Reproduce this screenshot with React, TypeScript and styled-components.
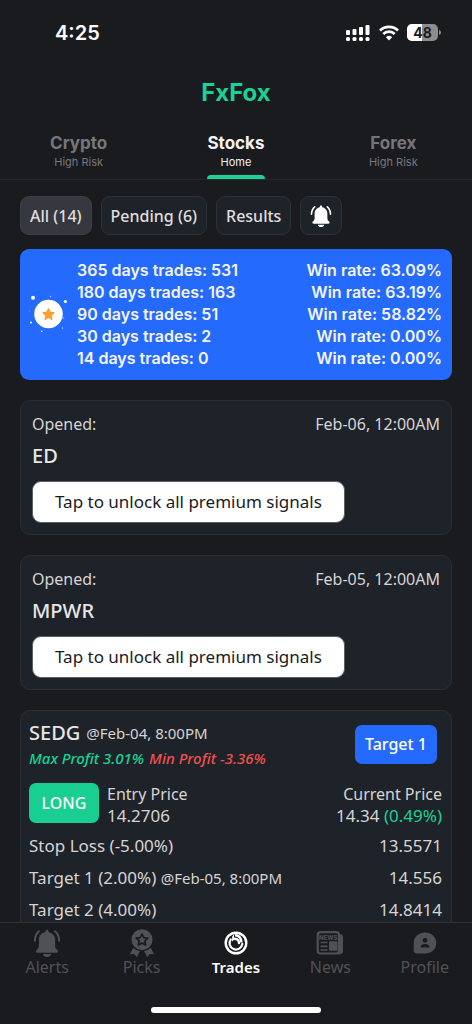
import React from "react";
import styled, { createGlobalStyle } from "styled-components";

const green = "#1bd196";
const blue = "#246bfd";
const panel = "#1e2329";
const display = `Inter, "Liberation Sans", sans-serif`;
const body = `"Noto Sans", "Open Sans", sans-serif`;

const Global = createGlobalStyle`
  * { box-sizing: border-box; }
  html, body, #root { height: 100%; }
  body { margin: 0; background: #1a1b1f; color: #d6d4d4; font: 16px/22px ${body}; }
  button { font: inherit; color: inherit; border: 0; padding: 0; background: none; cursor: pointer; }
  svg { display: block; flex: none; }
`;

const Screen = styled.div`
  height: 100vh;
  display: flex;
  flex-direction: column;
`;

const StatusBar = styled.div`
  display: flex;
  align-items: center;
  justify-content: space-between;
  padding: 20px 31px 0 55px;
  height: 46px;
  flex: none;
  color: #fff;
`;

const Clock = styled.time`
  font: 600 20px/24px ${display};
`;

const StatusIcons = styled.div`
  display: flex;
  align-items: center;
  gap: 8px;
`;

const Brand = styled.h1`
  margin: 31px 0 0;
  flex: none;
  text-align: center;
  color: ${green};
  font: 700 24px/32px ${display};
`;

const Tabs = styled.nav`
  display: grid;
  grid-template-columns: repeat(3, 1fr);
  justify-items: center;
  flex: none;
  margin-top: 23px;
  border-bottom: 1px solid #27282d;
`;

const Tab = styled.button<{ $active?: boolean }>`
  display: flex;
  flex-direction: column;
  align-items: center;
  height: 47px;
  color: ${(p) => (p.$active ? "#f4f2f2" : "#76777b")};
  font: 700 17px/22px ${display};

  small {
    font: 400 11px/16px ${display};
  }

  &::after {
    content: "";
    width: 100%;
    height: 4px;
    margin-top: auto;
    border-radius: 4px 4px 0 0;
    background: ${(p) => (p.$active ? green : "transparent")};
  }
`;

const Content = styled.main`
  flex: 1;
  min-height: 0;
  overflow: hidden;
  padding: 16px 20px 0;
  display: flex;
  flex-direction: column;
  gap: 20px;

  > * { flex: none; }
`;

const Filters = styled.div`
  display: flex;
  gap: 9px;
  margin-bottom: -6px;
`;

const Chip = styled.button<{ $active?: boolean }>`
  height: 39px;
  padding: 0 9px;
  border: 1px solid ${(p) => (p.$active ? "#3b3f46" : "#2b3238")};
  border-radius: 9px;
  background: ${(p) => (p.$active ? "#35383f" : panel)};
  color: #e0dede;
  font: 500 16px/22px ${body};

  svg { color: #fff; }
`;

const Stats = styled.section`
  display: flex;
  align-items: center;
  gap: 9px;
  padding: 10px 10px 11px 9px;
  border-radius: 9px;
  background: ${blue};
  color: #f4f4fa;
`;

const StatsTable = styled.table`
  flex: 1;
  border-collapse: collapse;
  font: 600 16px/22px ${display};

  th, td { padding: 0; font-weight: 600; text-align: left; white-space: nowrap; }
  td { text-align: right; }
`;

const Card = styled.article`
  display: flex;
  flex-direction: column;
  align-items: flex-start;
  padding: 12px 11px 11px;
  border: 1px solid #2a2f35;
  border-radius: 10px;
  background: ${panel};
`;

const Row = styled.div`
  display: flex;
  align-items: center;
  justify-content: space-between;
  width: 100%;
`;

const Ticker = styled.h2<{ $locked?: boolean }>`
  margin: ${(p) => (p.$locked ? "7px 0 11px" : "0")};
  color: #e8e6e6;
  font: 500 20px/28px ${body};
`;

const UnlockButton = styled.button`
  height: 42px;
  padding: 0 22px;
  border: 1px solid #596068;
  border-radius: 9px;
  background: #fff;
  color: #1a1b1f;
  font: 400 17px/22px ${body};
`;

const TradeCard = styled(Card)`
  padding: 8px 9px 8px 8px;
`;

const TitleLine = styled.div`
  display: flex;
  align-items: center;
  gap: 6px;
`;

const Stamp = styled.time`
  font-size: 15px;
`;

const Profit = styled.div`
  display: flex;
  gap: 5px;
  color: #f0504f;
  font: italic 500 15px/22px ${body};
`;

const Gain = styled.span`
  color: ${green};
`;

const TargetTag = styled.button`
  height: 39px;
  margin-right: 5px;
  padding: 0 10px;
  border-radius: 7px;
  background: ${blue};
  color: #fff;
  font: 500 16px/22px ${body};
`;

const PriceRow = styled(Row)`
  margin: 10px 0 3px;
`;

const Side = styled.div`
  display: flex;
  align-items: center;
  gap: 8px;
`;

const LongTag = styled.span`
  display: grid;
  place-items: center;
  width: 70px;
  height: 40px;
  border-radius: 7px;
  background: #19ce91;
  color: #fff;
  font-weight: 500;
`;

const Price = styled.div<{ $end?: boolean }>`
  display: flex;
  flex-direction: column;
  padding-top: 4px;
  text-align: ${(p) => (p.$end ? "right" : "left")};
`;

const Figure = styled.span`
  font-size: 17px;
`;

const Level = styled(Row)`
  height: 32px;
  font-size: 17px;
`;

const BottomNav = styled.nav`
  display: grid;
  grid-template-columns: repeat(5, 1fr);
  flex: none;
  padding-top: 6px;
  border-top: 1px solid #303136;
`;

const NavItem = styled.button<{ $active?: boolean }>`
  display: flex;
  flex-direction: column;
  align-items: center;
  color: ${(p) => (p.$active ? "#fff" : "#505156")};
  font: ${(p) => (p.$active ? "600 15px" : "400 16px")}/20px ${body};
`;

const HomeIndicator = styled.div`
  align-self: center;
  flex: none;
  width: 36%;
  height: 6px;
  margin: 30px 0 11px;
  border-radius: 3px;
  background: #fff;
`;

const Bell = ({ size }: { size: number }) => (
  <svg width={size} height={size} viewBox="0 0 28 28" fill="currentColor" aria-hidden="true">
    <path d="M14 .7c.9 0 1.500.6 1.500 1.500v.8c3.900.7 6.600 3.900 6.600 8v5.600c0 2 .7 3.100 2 4.200 1.600 1.300.9 3-.8 3H4.700c-1.700 0-2.400-1.700-.8-3 1.300-1.100 2-2.200 2-4.200v-5.600c0-4.100 2.700-7.300 6.600-8v-.8c0-.9.6-1.500 1.500-1.500Z" />
    <path d="M9.800 25h8.400c-.5 1.800-2.200 3-4.200 3s-3.700-1.200-4.200-3Z" />
    <path d="M6 2.300C3.500 4.400 2 7.500 1.900 11.800M22 2.300c2.500 2.100 4 5.200 4.100 9.500" fill="none" stroke="currentColor" strokeWidth="2" strokeLinecap="round" />
  </svg>
);

const Medal = () => (
  <svg width="28" height="28" viewBox="0 0 28 28" aria-hidden="true">
    <path fill="currentColor" d="m5.200 18.800-3.200 6.400 4.200-.3 2.600 3.100 3.200-6c-2.700-.3-4.900-1.500-6.800-3.200Zm17.600 0 3.200 6.400-4.200-.3-2.600 3.100-3.200-6c2.700-.3 4.900-1.500 6.800-3.200Z" />
    <circle cx="14" cy="10.700" r="10.500" fill="currentColor" />
    <path d="m14 5 1.800 3.700 4 .5-3 2.800.8 4-3.600-1.900-3.600 1.900.8-4-3-2.800 4-.5Z" fill="none" stroke="#1a1b1f" strokeWidth="1.700" strokeLinejoin="round" />
  </svg>
);

const Trades = () => (
  <svg width="28" height="28" viewBox="0 0 28 28" fill="none" stroke="currentColor" strokeLinecap="round" aria-hidden="true">
    <circle cx="14" cy="14" r="10.300" strokeWidth="2.400" />
    <path d="M8.800 10.300A6.400 6.400 0 1 0 20.300 14.800" strokeWidth="2.200" />
    <path d="M12.600 5c5 0 8 3.200 8 8.600h-2.400c0-3.600-1.800-5.700-5-6.100Z" fill="currentColor" stroke="none" />
    <path d="M12.500 9.700c3 .1 4.500 1.700 4.500 4.300" strokeWidth="2.400" />
    <path d="M10.200 7.500 12 5.500v5.500l-2 1.500Z" fill="currentColor" stroke="none" />
  </svg>
);

const News = () => (
  <svg width="28" height="28" viewBox="0 0 28 28" aria-hidden="true">
    <path d="M24 5c2 .2 3 1.200 3 3v14c0 2-1.400 3.500-3.500 3.500H21c2-.5 3-1.500 3-3.500Z" fill="currentColor" />
    <rect x="1.700" y="3.200" width="21.300" height="21.300" rx="3" fill="none" stroke="currentColor" strokeWidth="2.200" />
    <text x="12.300" y="10.800" textAnchor="middle" fill="currentColor" fontFamily="Inter" fontWeight="800" fontSize="6">NEWS</text>
    <path d="M4.500 13.500h7M4.500 17.300h7M4.500 21h7" stroke="currentColor" strokeWidth="1.700" />
    <rect x="13" y="12.200" width="8.500" height="9.500" rx="1" fill="currentColor" />
  </svg>
);

const Profile = () => (
  <svg width="28" height="28" viewBox="0 0 28 28" aria-hidden="true">
    <path d="M14 3.500c6.400 0 11.300 4.600 11.300 10.500S20.400 24.500 14 24.500H5.500c-1.600 0-2.800-1.200-2.800-2.800V14C2.700 8.100 7.600 3.500 14 3.500Z" fill="currentColor" />
    <circle cx="14" cy="11.300" r="2.400" fill="#1a1b1f" />
    <path d="M9.500 18.500c0-2.300 1.600-3.500 4.500-3.500s4.500 1.200 4.500 3.500Z" fill="#1a1b1f" />
  </svg>
);

const Signal = () => (
  <svg width="25" height="18" viewBox="0 0 25 18" fill="currentColor" aria-hidden="true">
    <rect y="6" width="4" height="5" rx="1" /><rect x="6.500" y="5" width="4" height="6" rx="1" />
    <rect x="13" y="3" width="4" height="8" rx="1" /><rect x="19.500" y="1" width="4" height="10" rx="1" />
    {[0, 6.5, 13, 19.5].map((x) => <rect key={x} x={x} y="13" width="4" height="4" rx="1.500" />)}
  </svg>
);

const Wifi = () => (
  <svg width="20" height="16" viewBox="0 0 20 16" fill="none" stroke="currentColor" strokeWidth="2.700" aria-hidden="true">
    <path d="M1 5.500a13 13 0 0 1 18 0M4.300 9a8.200 8.200 0 0 1 11.400 0" />
    <path d="m10 15.500-3.100-3.200a4.500 4.500 0 0 1 6.200 0Z" fill="currentColor" stroke="none" />
  </svg>
);

const Battery = () => (
  <svg width="34" height="18" viewBox="0 0 34 18" aria-label="Battery 48%">
    <rect width="31" height="17" rx="5" fill="#8d8d90" />
    <path d="M5 0h10v17H5a5 5 0 0 1-5-5V5a5 5 0 0 1 5-5Z" fill="#fff" />
    <path d="M32 6v5c1.300-.4 2-1.300 2-2.500S33.300 6.400 32 6Z" fill="#8d8d90" />
    <text x="15.500" y="13.500" textAnchor="middle" fontFamily="Inter" fontWeight="700" fontSize="14" fill="#1a1b1f">48</text>
  </svg>
);

const StarBadge = () => (
  <svg width="39" height="40" viewBox="0 0 39 40" fill="#fff" aria-hidden="true">
    <circle cx="19.500" cy="20" r="14.300" />
    <circle cx="4" cy="3.700" r="2" /><circle cx="36.300" cy="7.500" r="1.600" />
    <circle cx="2" cy="28.500" r="1" /><circle cx="12.700" cy="37.300" r="0.800" />
    <circle cx="33.500" cy="34" r="0.800" opacity=".6" /><circle cx="21.500" cy="2.500" r="0.700" opacity=".6" />
    <circle cx="34.500" cy="24" r="0.800" opacity=".6" /><circle cx="0.700" cy="17" r="0.600" opacity=".4" />
    <path d="m19.500 14.500 1.800 3.600 4 .6-2.900 2.900.7 4-3.600-1.900-3.600 1.900.7-4-2.900-2.900 4-.6Z" fill="#f9a22b" stroke="#f9a22b" strokeWidth="1" strokeLinejoin="round" />
  </svg>
);

const stats = [
  ["365 days trades: 531", "63.09%"],
  ["180 days trades: 163", "63.19%"],
  ["90 days trades: 51", "58.82%"],
  ["30 days trades: 2", "0.00%"],
  ["14 days trades: 0", "0.00%"],
];

const locked = [
  ["ED", "Feb-06, 12:00AM"],
  ["MPWR", "Feb-05, 12:00AM"],
];

const levels = [
  { label: "Stop Loss (-5.00%)", value: "13.5571" },
  { label: "Target 1 (2.00%)", at: "@Feb-05, 8:00PM", value: "14.556" },
  { label: "Target 2 (4.00%)", value: "14.8414" },
];

export default function App() {
  return (
    <Screen>
      <Global />
      <StatusBar>
        <Clock>4:25</Clock>
        <StatusIcons><Signal /><Wifi /><Battery /></StatusIcons>
      </StatusBar>
      <Brand>FxFox</Brand>
      <Tabs>
        <Tab>Crypto<small>High Risk</small></Tab>
        <Tab $active>Stocks<small>Home</small></Tab>
        <Tab>Forex<small>High Risk</small></Tab>
      </Tabs>
      <Content>
        <Filters>
          <Chip $active>All (14)</Chip>
          <Chip>Pending (6)</Chip>
          <Chip>Results</Chip>
          <Chip aria-label="Notifications"><Bell size={22} /></Chip>
        </Filters>
        <Stats>
          <StarBadge />
          <StatsTable>
            <tbody>
              {stats.map(([label, rate]) => (
                <tr key={label}><th scope="row">{label}</th><td>Win rate: {rate}</td></tr>
              ))}
            </tbody>
          </StatsTable>
        </Stats>
        {locked.map(([ticker, opened]) => (
          <Card key={ticker}>
            <Row><span>Opened:</span><time>{opened}</time></Row>
            <Ticker $locked>{ticker}</Ticker>
            <UnlockButton>Tap to unlock all premium signals</UnlockButton>
          </Card>
        ))}
        <TradeCard>
          <Row>
            <div>
              <TitleLine><Ticker>SEDG</Ticker><Stamp>@Feb-04, 8:00PM</Stamp></TitleLine>
              <Profit><Gain>Max Profit 3.01%</Gain><span>Min Profit -3.36%</span></Profit>
            </div>
            <TargetTag>Target 1</TargetTag>
          </Row>
          <PriceRow>
            <Side>
              <LongTag>LONG</LongTag>
              <Price><span>Entry Price</span><Figure>14.2706</Figure></Price>
            </Side>
            <Price $end><span>Current Price</span><Figure>14.34 <Gain>(0.49%)</Gain></Figure></Price>
          </PriceRow>
          {levels.map((l) => (
            <Level key={l.label}>
              <span>{l.label} {l.at && <Stamp>{l.at}</Stamp>}</span>
              <span>{l.value}</span>
            </Level>
          ))}
        </TradeCard>
      </Content>
      <BottomNav>
        <NavItem><Bell size={28} />Alerts</NavItem>
        <NavItem><Medal />Picks</NavItem>
        <NavItem $active><Trades />Trades</NavItem>
        <NavItem><News />News</NavItem>
        <NavItem><Profile />Profile</NavItem>
      </BottomNav>
      <HomeIndicator />
    </Screen>
  );
}
